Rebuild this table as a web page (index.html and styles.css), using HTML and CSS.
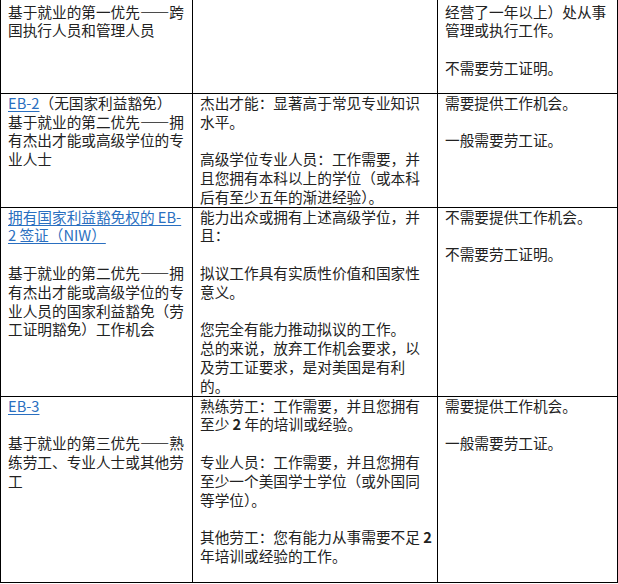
FILE: index.html
```html
<!DOCTYPE html>
<html lang="zh-CN">
<head>
<meta charset="utf-8">
<title>职业移民类别</title>
<link rel="stylesheet" href="styles.css">
</head>
<body>
<table class="visa-table">
  <colgroup>
    <col class="c1">
    <col class="c2">
    <col class="c3">
  </colgroup>
  <tr class="row-first">
    <td>
      <p>基于就业的第一优先——跨国执行人员和管理人员</p>
    </td>
    <td></td>
    <td>
      <p>经营了一年以上）处从事管理或执行工作。</p>
      <p class="sp">不需要劳工证明。</p>
    </td>
  </tr>
  <tr>
    <td>
      <p><a class="lnk" href="#">EB-2</a>（无国家利益豁免）</p>
      <p>基于就业的第二优先——拥有杰出才能或高级学位的专业人士</p>
    </td>
    <td>
      <p>杰出才能：显著高于常见专业知识水平。</p>
      <p class="sp">高级学位专业人员：工作需要，并且您拥有本科以上的学位（或本科后有至少五年的渐进经验）。</p>
    </td>
    <td>
      <p>需要提供工作机会。</p>
      <p class="sp">一般需要劳工证。</p>
    </td>
  </tr>
  <tr>
    <td>
      <p><a class="lnk" href="#">拥有国家利益豁免权的 EB-2 签证（NIW）</a></p>
      <p class="sp">基于就业的第二优先——拥有杰出才能或高级学位的专业人员的国家利益豁免（劳工证明豁免）工作机会</p>
    </td>
    <td>
      <p>能力出众或拥有上述高级学位，并且：</p>
      <p class="sp">拟议工作具有实质性价值和国家性意义。</p>
      <p class="sp">您完全有能力推动拟议的工作。</p>
      <p>总的来说，放弃工作机会要求，以及劳工证要求，是对美国是有利的。</p>
    </td>
    <td>
      <p>不需要提供工作机会。</p>
      <p class="sp">不需要劳工证明。</p>
    </td>
  </tr>
  <tr class="row-last">
    <td>
      <p><a class="lnk" href="#">EB-3</a></p>
      <p class="sp">基于就业的第三优先——熟练劳工、专业人士或其他劳工</p>
    </td>
    <td>
      <p>熟练劳工：工作需要，并且您拥有至少 <b class="num">2</b> 年的培训或经验。</p>
      <p class="sp">专业人员：工作需要，并且您拥有至少一个美国学士学位（或外国同等学位）。</p>
      <p class="sp">其他劳工：您有能力从事需要不足 <b class="num">2</b> 年培训或经验的工作。</p>
    </td>
    <td>
      <p>需要提供工作机会。</p>
      <p class="sp">一般需要劳工证。</p>
    </td>
  </tr>
</table>
</body>
</html>
```

FILE: styles.css
```css
html, body {
  margin: 0;
  padding: 0;
  background: #ffffff;
}

.visa-table {
  border-collapse: collapse;
  table-layout: fixed;
  width: 617px;
  font-family: "Noto Sans CJK SC", sans-serif;
  font-size: 14.67px;
  line-height: 18.8px;
  color: #222222;
}

.c1 { width: 192px; }
.c2 { width: 245px; }
.c3 { width: 180px; }

.visa-table td {
  border: 1px solid #000000;
  vertical-align: top;
  padding: 0 5px 0 7px;
}

.visa-table td:first-child {
  padding-right: 7px;
}

.visa-table p {
  margin: 0;
}

.visa-table p.sp {
  margin-top: 18.8px;
}

.row-first td {
  border-top: none;
  padding-top: 2.6px;
  padding-bottom: 15px;
}

.row-last td {
  padding-bottom: 16px;
}

.lnk {
  color: #2a6fc0;
  text-decoration: underline;
  text-underline-offset: 2px;
}

.num {
  font-weight: 700;
}
```
